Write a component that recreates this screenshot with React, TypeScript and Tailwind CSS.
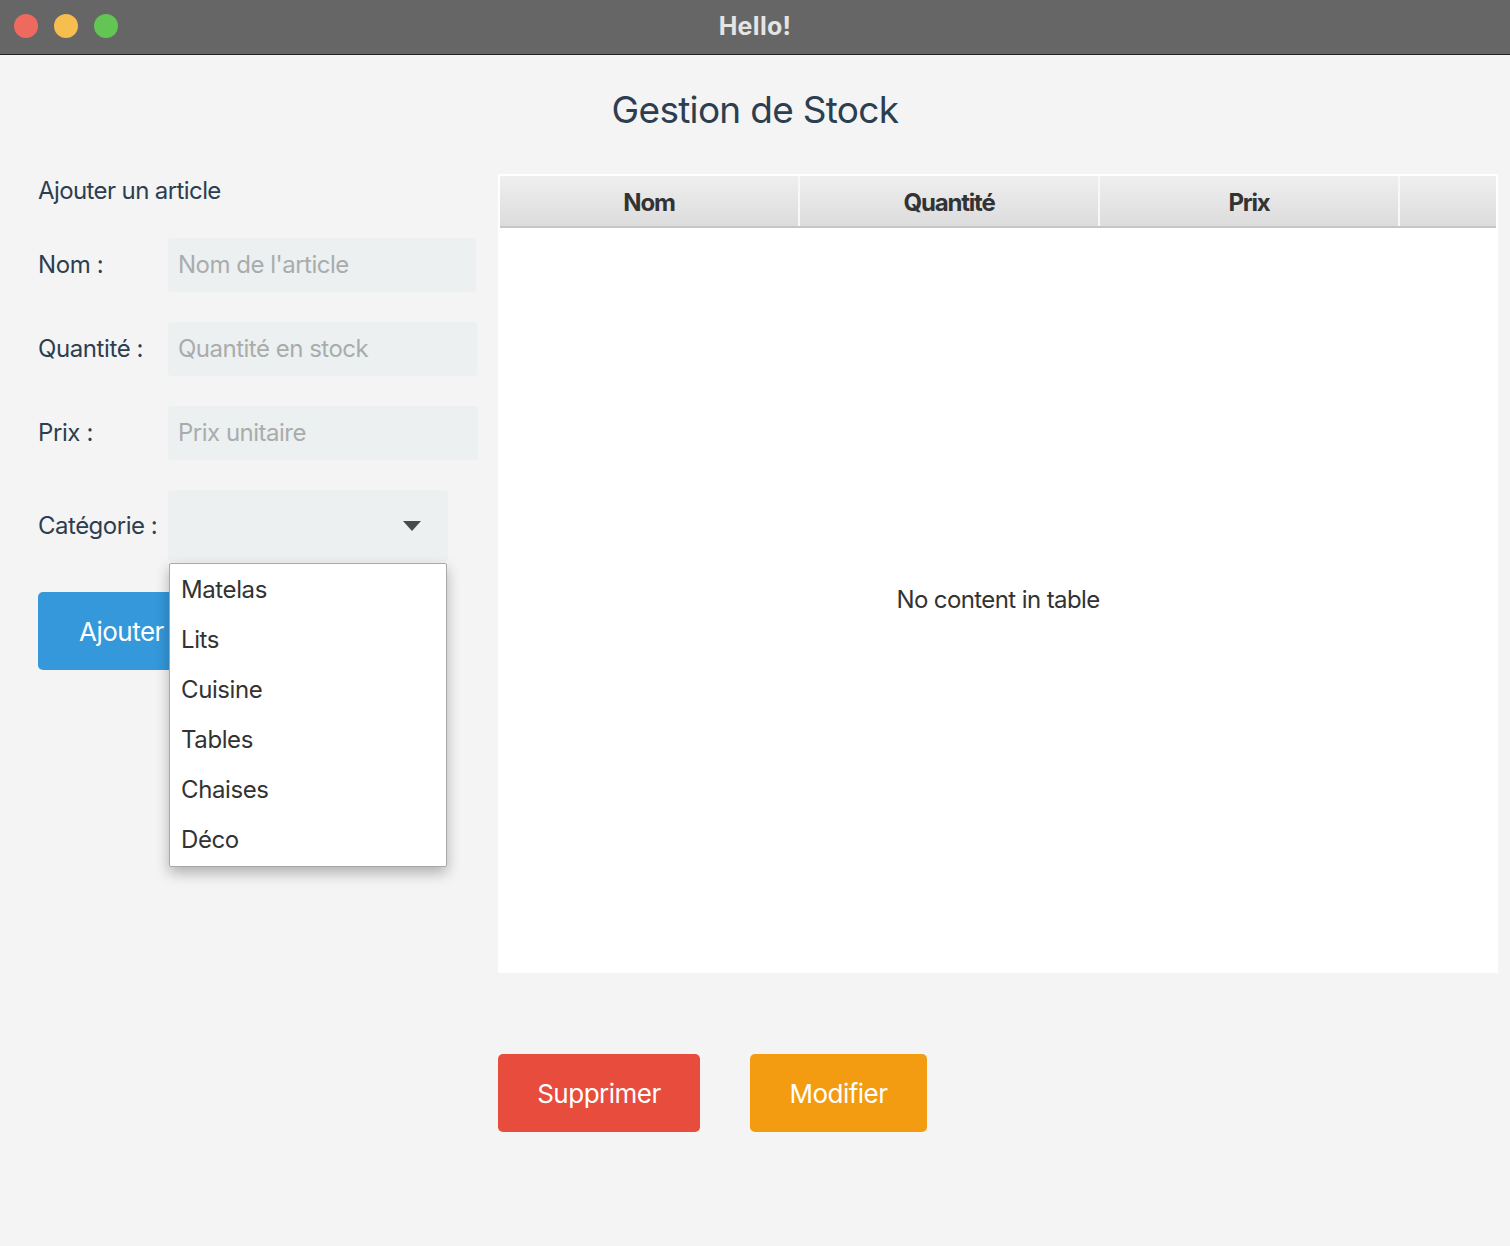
const categories = ["Matelas", "Lits", "Cuisine", "Tables", "Chaises", "Déco"];

const fields = [
  { label: "Nom :", placeholder: "Nom de l'article", width: "w-[308px]" },
  { label: "Quantité :", placeholder: "Quantité en stock", width: "w-[309px]" },
  { label: "Prix :", placeholder: "Prix unitaire", width: "w-[310px]" },
];

const columns = ["Nom", "Quantité", "Prix"];

const App = () => {
  return (
    <div className="w-[1510px] h-[1246px] flex flex-col bg-[#f4f4f4] font-['Inter',sans-serif] overflow-hidden">
      {/* title bar */}
      <div className="relative h-[55px] shrink-0 bg-[#666666] border-b-[1.5px] border-[#222222] flex items-center justify-center">
        <div className="absolute left-[14px] top-[14px] flex gap-[16px]">
          <span className="w-[24px] h-[24px] rounded-full bg-[#ee6a5f]" />
          <span className="w-[24px] h-[24px] rounded-full bg-[#f5be4f]" />
          <span className="w-[24px] h-[24px] rounded-full bg-[#62c554]" />
        </div>
        <span className="text-[25px] font-bold text-[#e4e4e4] tracking-[0.3px]">Hello!</span>
      </div>

      <main className="flex-1 flex flex-col">
        <h1 className="pt-[32px] text-center text-[37px] leading-[46px] text-[#2c3e50] tracking-[-0.7px]">
          Gestion de Stock
        </h1>

        <div className="mt-[41px] flex">
          {/* form */}
          <div className="w-[498px] pl-[38px] flex flex-col">
            <h2 className="mt-[2px] text-[24px] leading-[30px] text-[#2c3e50] tracking-[-0.6px]">Ajouter un article</h2>

            <div className="mt-[32px] flex flex-col gap-[30px]">
              {fields.map((f) => (
                <div key={f.label} className="flex items-center">
                  <span className="w-[130px] text-[24px] text-[#2c3e50] tracking-[-0.4px]">{f.label}</span>
                  <div className={`${f.width} h-[54px] rounded-[4px] bg-[#ecf0f1] flex items-center px-[10px] text-[24px] text-[#a9acad] tracking-[-0.5px]`}>
                    {f.placeholder}
                  </div>
                </div>
              ))}

              <div className="flex items-center">
                <span className="w-[130px] text-[24px] text-[#2c3e50] tracking-[-0.5px]">Catégorie :</span>
                <div className="relative w-[280px] h-[72px] rounded-[4px] bg-[#ecf0f1] flex items-center justify-end pr-[27px]">
                  <svg width="18" height="10" viewBox="0 0 18 10">
                    <path d="M0 0 H18 L9 10 Z" fill="#4a4a4a" />
                  </svg>
                  {/* open dropdown */}
                  <ul className="absolute left-[1px] top-full mt-[1px] w-[278px] h-[304px] bg-white border border-[#a8a8a8] rounded-[2px] shadow-[0_6px_14px_rgba(0,0,0,0.28)] z-10 py-[1px]">
                    {categories.map((c) => (
                      <li key={c} className="h-[50px] flex items-center pl-[11px] text-[24px] text-[#333333] tracking-[-0.4px]">
                        {c}
                      </li>
                    ))}
                  </ul>
                </div>
              </div>

              <button className="self-start h-[78px] px-[41px] rounded-[5px] bg-[#3498db] text-white text-[26px] tracking-[-0.5px]">
                Ajouter
              </button>
            </div>
          </div>

          {/* table */}
          <div className="w-[1000px] h-[799px] bg-white p-[2px] flex flex-col">
            <div className="flex h-[52px] border-b-2 border-[#c6c6c6] bg-gradient-to-b from-[#efefef] to-[#dcdcdc]">
              {columns.map((c) => (
                <div
                  key={c}
                  className="w-[300px] flex items-center justify-center pt-[3px] border-r-2 border-[#f8f8f8] text-[24px] font-bold text-[#333333] tracking-[-1.2px]"
                >
                  {c}
                </div>
              ))}
              <div className="flex-1" />
            </div>
            <div className="flex-1 flex items-center justify-center">
              <span className="text-[24px] text-[#333333] tracking-[-0.6px]">No content in table</span>
            </div>
          </div>
        </div>

        <div className="mt-[81px] ml-[498px] flex gap-[50px]">
          <button className="w-[202px] h-[78px] rounded-[5px] bg-[#e74c3c] text-white text-[26px] tracking-[-0.5px]">
            Supprimer
          </button>
          <button className="w-[177px] h-[78px] rounded-[5px] bg-[#f39c12] text-white text-[26px] tracking-[-0.5px]">
            Modifier
          </button>
        </div>
      </main>
    </div>
  );
};

export default App;
